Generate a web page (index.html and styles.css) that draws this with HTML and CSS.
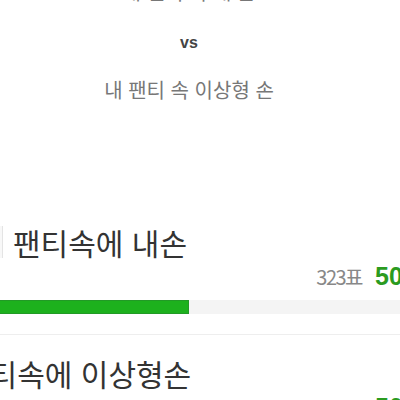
FILE: index.html
```html
<!DOCTYPE html>
<html lang="ko">
<head>
    <meta charset="UTF-8">
    <meta name="viewport" content="width=device-width, initial-scale=1.0">
    <title>투표</title>
    <link rel="stylesheet" href="styles.css">
</head>
<body>
    <div class="page">
        <div class="question">
            <p class="choice choice-top">내 팬티 속 내 손</p>
            <p class="vs">vs</p>
            <p class="choice">내 팬티 속 이상형 손</p>
        </div>

        <div class="poll">
            <div class="option">
                <div class="title">
                    <span class="check"></span>
                    <span>팬티속에 내손</span>
                </div>
                <div class="stats">
                    <span class="count">323표</span>
                    <span class="percent">50%</span>
                </div>
                <div class="track">
                    <div class="fill" style="width: 50%;"></div>
                </div>
            </div>

            <div class="option">
                <div class="title title-long">
                    <span>팬티속에 이상형손</span>
                </div>
                <div class="stats">
                    <span class="count">321표</span>
                    <span class="percent">50%</span>
                </div>
            </div>
        </div>
    </div>
</body>
</html>
```

FILE: styles.css
```css
body {
    margin: 0;
    padding: 0;
    background-color: #fff;
    font-family: "Noto Sans CJK KR", "Noto Sans", sans-serif;
    overflow: hidden;
}

.page {
    width: 400px;
    height: 400px;
    overflow: hidden;
}

.question {
    width: 378px;
    text-align: center;
}

.choice {
    margin: 0;
    font-size: 20px;
    line-height: 28px;
    color: #777;
}

.choice-top {
    margin-top: -22px;
}

.vs {
    margin: 27px 0 23px;
    font-family: "Liberation Sans", Arial, sans-serif;
    font-size: 16px;
    font-weight: bold;
    line-height: 20px;
    color: #444;
}

.poll {
    margin-top: 116px;
    margin-left: -22px;
    width: 422px;
}

.option {
    border-bottom: 1px solid #eee;
    padding-bottom: 20px;
}

.option + .option {
    padding-top: 16px;
}

.title {
    display: flex;
    align-items: center;
    gap: 10px;
    font-size: 30px;
    line-height: 44px;
    color: #333;
    white-space: nowrap;
}

.check {
    width: 24px;
    height: 32px;
    border-right: 1px solid #e4e4e4;
    background-color: #f8f8f8;
}

.title-long {
    margin-left: -16px;
}

.stats {
    display: flex;
    justify-content: flex-end;
    align-items: baseline;
    gap: 13px;
    line-height: 24px;
}

.count {
    font-size: 20px;
    letter-spacing: -1.5px;
    color: #888;
}

.percent {
    width: 25px;
    overflow: hidden;
    white-space: nowrap;
    font-family: "Liberation Sans", Arial, sans-serif;
    font-size: 25px;
    font-weight: bold;
    color: #2b9b1f;
}

.track {
    margin-top: 11px;
    height: 14px;
    background-color: #f4f4f4;
}

.fill {
    height: 100%;
    box-sizing: border-box;
    background-color: #1db11d;
    border: 1px solid #229a26;
}
```
